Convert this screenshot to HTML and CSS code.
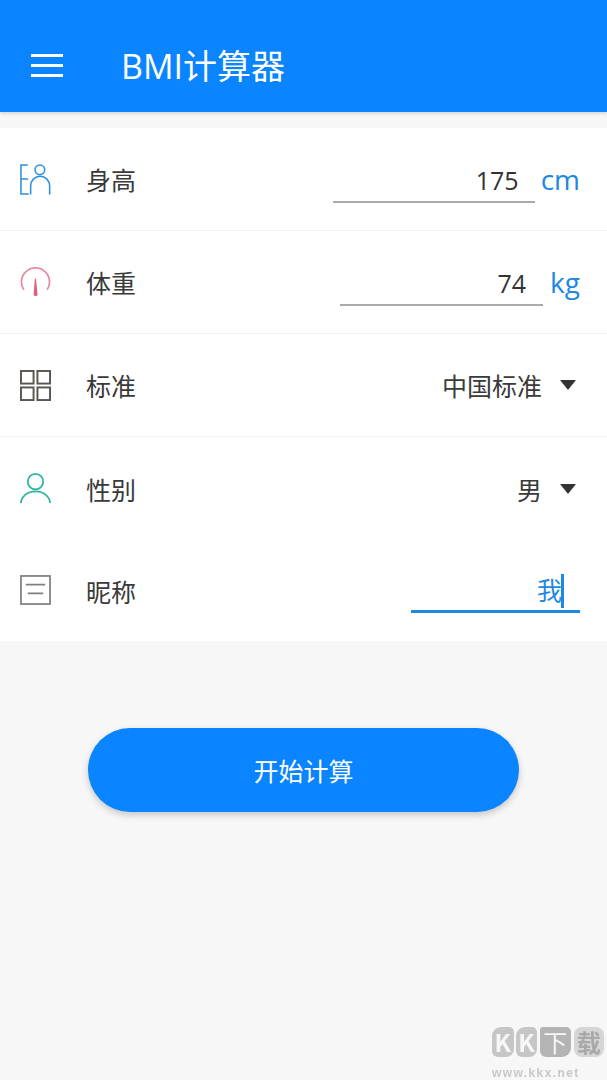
FILE: index.html
```html
<!DOCTYPE html>
<html lang="zh-CN">
<head>
    <meta charset="UTF-8">
    <meta name="viewport" content="width=device-width, initial-scale=1.0">
    <title>BMI计算器</title>
    <link rel="stylesheet" href="styles.css">
</head>
<body>
    <header class="topbar">
        <div class="menu-icon"><span></span><span></span><span></span></div>
        <h1 class="title">BMI计算器</h1>
    </header>

    <div class="form">
        <div class="row">
            <svg class="icon" viewBox="0 0 32 32" fill="none" stroke="#2f8fdc" stroke-width="1.6">
                <path d="M8 1H1v30h8M1 15.5h7.5"/>
                <circle cx="20.5" cy="6" r="5"/>
                <path d="M11 31.5v-9a9.8 9.8 0 0 1 19.6 0v9"/>
            </svg>
            <span class="label">身高</span>
            <div class="value">
                <div class="field field-height">175</div>
                <span class="unit">cm</span>
            </div>
        </div>
        <div class="row">
            <svg class="icon" viewBox="0 0 32 32" fill="none" stroke="#e58a9c" stroke-width="1.8">
                <path d="M4 23.5a14.5 14.5 0 1 1 24 0"/>
                <path d="M15.3 12h1.2l1.6 16a2 2 0 0 1-4 0z" fill="#e0607a" stroke="none"/>
            </svg>
            <span class="label">体重</span>
            <div class="value">
                <div class="field field-weight">74</div>
                <span class="unit">kg</span>
            </div>
        </div>
        <div class="row">
            <svg class="icon" viewBox="0 0 32 32" fill="none" stroke="#5c5650" stroke-width="2">
                <rect x="1" y="1" width="13" height="13"/>
                <rect x="18" y="1" width="13" height="13"/>
                <rect x="1" y="18" width="13" height="13"/>
                <rect x="18" y="18" width="13" height="13"/>
            </svg>
            <span class="label">标准</span>
            <div class="value">
                <span class="choice">中国标准</span>
                <span class="arrow"></span>
            </div>
        </div>
        <div class="row no-line">
            <svg class="icon" viewBox="0 0 32 32" fill="none" stroke="#2bb5a0" stroke-width="1.8">
                <circle cx="16" cy="9" r="8"/>
                <path d="M1 31a15 12 0 0 1 30 0"/>
            </svg>
            <span class="label">性别</span>
            <div class="value">
                <span class="choice">男</span>
                <span class="arrow"></span>
            </div>
        </div>
        <div class="row no-line row-last">
            <svg class="icon" viewBox="0 0 32 32" fill="none" stroke="#808080" stroke-width="1.8">
                <rect x="1" y="1" width="30" height="29"/>
                <path d="M6 10h20M8 19h16"/>
            </svg>
            <span class="label">昵称</span>
            <div class="value">
                <div class="field field-name">我<span class="caret"></span></div>
            </div>
        </div>
    </div>

    <button class="start">开始计算</button>

    <div class="watermark">
        <div class="wm-logo">
            <span class="wm-tile wm-k">K</span>
            <span class="wm-tile wm-k">K</span>
            <span class="wm-tile wm-xia">下</span>
            <span class="wm-tile wm-zai">载</span>
        </div>
        <div class="wm-url">www.kkx.net</div>
    </div>
</body>
</html>
```

FILE: styles.css
```css
* {
    box-sizing: border-box;
}

body {
    margin: 0;
    height: 1080px;
    overflow: hidden;
    position: relative;
    background-color: #f7f7f7;
    font-family: "Noto Sans CJK SC", "Open Sans", sans-serif;
    color: #333;
}

.topbar {
    height: 112px;
    background-color: #0a84ff;
    display: flex;
    align-items: center;
    padding: 18px 0 0 31px;
    box-shadow: 0 2px 3px rgba(0, 0, 0, 0.12);
    position: relative;
}

.menu-icon {
    width: 32px;
    display: flex;
    flex-direction: column;
    gap: 7px;
    margin-right: 58px;
}

.menu-icon span {
    height: 3px;
    background-color: #fff;
}

.title {
    margin: 2px 0 0;
    font-family: "Open Sans", "Noto Sans CJK SC", sans-serif;
    font-size: 34px;
    font-weight: 400;
    color: #fff;
    line-height: 1;
}

.form {
    margin-top: 16px;
    background-color: #fff;
}

.row {
    height: 103px;
    display: flex;
    align-items: center;
    padding: 0 27px 0 20px;
    border-bottom: 1px solid #f3f3f3;
}

.row.no-line {
    border-bottom: none;
}

.row.row-last {
    height: 101px;
}

.icon {
    width: 31px;
    height: 31px;
    flex-shrink: 0;
    margin-right: 35px;
}

.label {
    font-size: 25px;
    color: #3a3a3a;
}

.value {
    margin-left: auto;
    display: flex;
    align-items: center;
}

.field {
    height: 48px;
    padding-top: 4px;
    text-align: right;
    font-family: "Open Sans", "Noto Sans CJK SC", sans-serif;
    font-size: 25px;
    line-height: 42px;
    border-bottom: 2px solid #aaa;
}

.field-height {
    width: 202px;
    padding-right: 16px;
}

.field-weight {
    width: 203px;
    padding-right: 17px;
    margin-right: 1px;
}

.field-name {
    width: 169px;
    height: 44px;
    padding: 0 18px 0 0;
    color: #1e88e5;
    border-bottom: 3px solid #1e88e5;
    position: relative;
}

.caret {
    position: absolute;
    right: 16px;
    top: 5px;
    width: 3px;
    height: 34px;
    background-color: #1e88e5;
}

.unit {
    font-family: "Open Sans", sans-serif;
    font-size: 28px;
    color: #1e88e5;
    margin-left: 6px;
    line-height: 1;
}

.choice {
    font-size: 25px;
    color: #3a3a3a;
}

.arrow {
    width: 0;
    height: 0;
    border-left: 8px solid transparent;
    border-right: 8px solid transparent;
    border-top: 10px solid #333;
    margin: 0 4px 0 18px;
}

.start {
    display: block;
    width: 431px;
    height: 84px;
    margin: 87px 0 0 88px;
    border: none;
    border-radius: 42px;
    background-color: #0a84ff;
    color: #fff;
    font-family: inherit;
    font-size: 25px;
    box-shadow: 0 3px 7px rgba(0, 0, 0, 0.2);
}

.watermark {
    position: absolute;
    left: 492px;
    top: 1027px;
    width: 112px;
    filter: blur(0.5px);
}

.wm-logo {
    display: flex;
    gap: 2px;
}

.wm-tile {
    height: 30px;
    color: #f7f7f7;
    font-size: 24px;
    font-weight: 700;
    line-height: 30px;
    text-align: center;
}

.wm-k {
    width: 22px;
    background-color: #c6c6c6;
    border-radius: 9px 5px 8px 6px;
}

.wm-xia {
    width: 31px;
    margin-left: 1px;
    background-color: #b4b4b4;
    border-radius: 3px 5px 9px 6px;
    font-weight: 400;
}

.wm-zai {
    width: 31px;
    margin-left: 1px;
    background-color: #d6d6d6;
    color: #a8a8a8;
    border-radius: 8px;
}

.wm-url {
    font-family: "Liberation Sans", sans-serif;
    font-size: 12px;
    font-weight: 700;
    letter-spacing: 1.4px;
    color: #c8c8c8;
    margin-top: 9px;
}
```
